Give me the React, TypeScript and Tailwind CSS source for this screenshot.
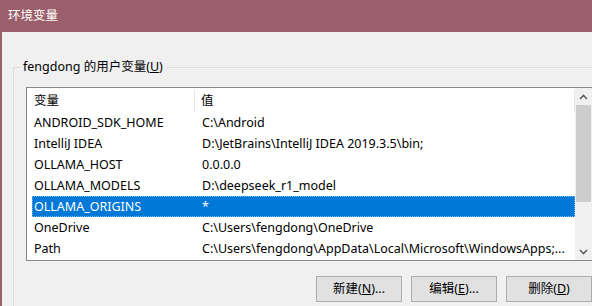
import React from 'react';

const rows = [
  { name: 'ANDROID_SDK_HOME', value: 'C:\\Android' },
  { name: 'IntelliJ IDEA', value: 'D:\\JetBrains\\IntelliJ IDEA 2019.3.5\\bin;' },
  { name: 'OLLAMA_HOST', value: '0.0.0.0' },
  { name: 'OLLAMA_MODELS', value: 'D:\\deepseek_r1_model' },
  { name: 'OLLAMA_ORIGINS', value: '*', selected: true },
  { name: 'OneDrive', value: 'C:\\Users\\fengdong\\OneDrive' },
  { name: 'Path', value: 'C:\\Users\\fengdong\\AppData\\Local\\Microsoft\\WindowsApps;...' },
];

const Chevron = ({ down }: { down?: boolean }) => (
  <svg width="9" height="6" viewBox="0 0 9 6" className="text-[#606060]">
    <path
      d={down ? 'M1 1 L4.5 4.5 L8 1' : 'M1 5 L4.5 1.5 L8 5'}
      fill="none"
      stroke="currentColor"
      strokeWidth="1.6"
    />
  </svg>
);

const Btn = ({ label, hotkey }: { label: string; hotkey: string }) => (
  <button className="w-[86px] h-[26px] shrink-0 bg-[#e1e1e1] border border-[#adadad] text-[12.5px] text-black flex items-center justify-center">
    {label}(<span className="underline">{hotkey}</span>){label === '删除' ? '' : '...'}
  </button>
);

export default function App() {
  return (
    <div className="w-[592px] h-[306px] overflow-hidden bg-[#f0f0f0] font-['Noto_Sans','Noto_Sans_CJK_SC',sans-serif] text-[12.5px] text-black">
      {/* title bar */}
      <div className="h-[32px] bg-[#9b5f6b] text-white flex items-center pl-[8px] pt-[1px]">环境变量</div>

      <div className="h-[274px] border-l-2 border-[#9b5f6b] pt-[27px]">
        <fieldset className="ml-[11px] border-l border-t border-[#dcdcdc] h-[260px]">
          <legend className="ml-[6px] px-[3px] leading-[16px]">
            fengdong 的用户变量(<span className="underline">U</span>)
          </legend>

          {/* list view */}
          <div className="mt-[12px] ml-[12px] w-[567px] h-[174px] border border-[#828790] bg-white flex">
            <div className="flex-1 flex flex-col">
              <div className="h-[24px] flex shrink-0 pt-[2px]">
                <div className="w-[168px] border-r border-[#e5e5e5] pl-[7px] flex items-center">变量</div>
                <div className="flex-1 border-r border-[#e5e5e5] pl-[6px] flex items-center">值</div>
              </div>
              {rows.map((r) => (
                <div
                  key={r.name}
                  className={`h-[21px] ml-[5px] pt-[1px] flex items-center whitespace-nowrap border ${
                    r.selected ? 'bg-[#0078d7] text-white border-dotted border-[#7fbaeb]' : 'border-transparent'
                  }`}
                >
                  <div className="w-[169px] pl-[1px] shrink-0">{r.name}</div>
                  <div className="overflow-hidden">{r.value}</div>
                </div>
              ))}
            </div>

            {/* scrollbar */}
            <div className="w-[17px] bg-[#f0f0f0] flex flex-col shrink-0">
              <div className="h-[17px] flex items-center justify-center">
                <Chevron />
              </div>
              <div className="h-[97px] bg-[#cdcdcd] mx-[1px]" />
              <div className="flex-1" />
              <div className="h-[17px] flex items-center justify-center">
                <Chevron down />
              </div>
            </div>
          </div>

          {/* buttons */}
          <div className="mt-[15px] ml-[302px] flex gap-[9px]">
            <Btn label="新建" hotkey="N" />
            <Btn label="编辑" hotkey="E" />
            <Btn label="删除" hotkey="D" />
          </div>
        </fieldset>
      </div>
    </div>
  );
}
